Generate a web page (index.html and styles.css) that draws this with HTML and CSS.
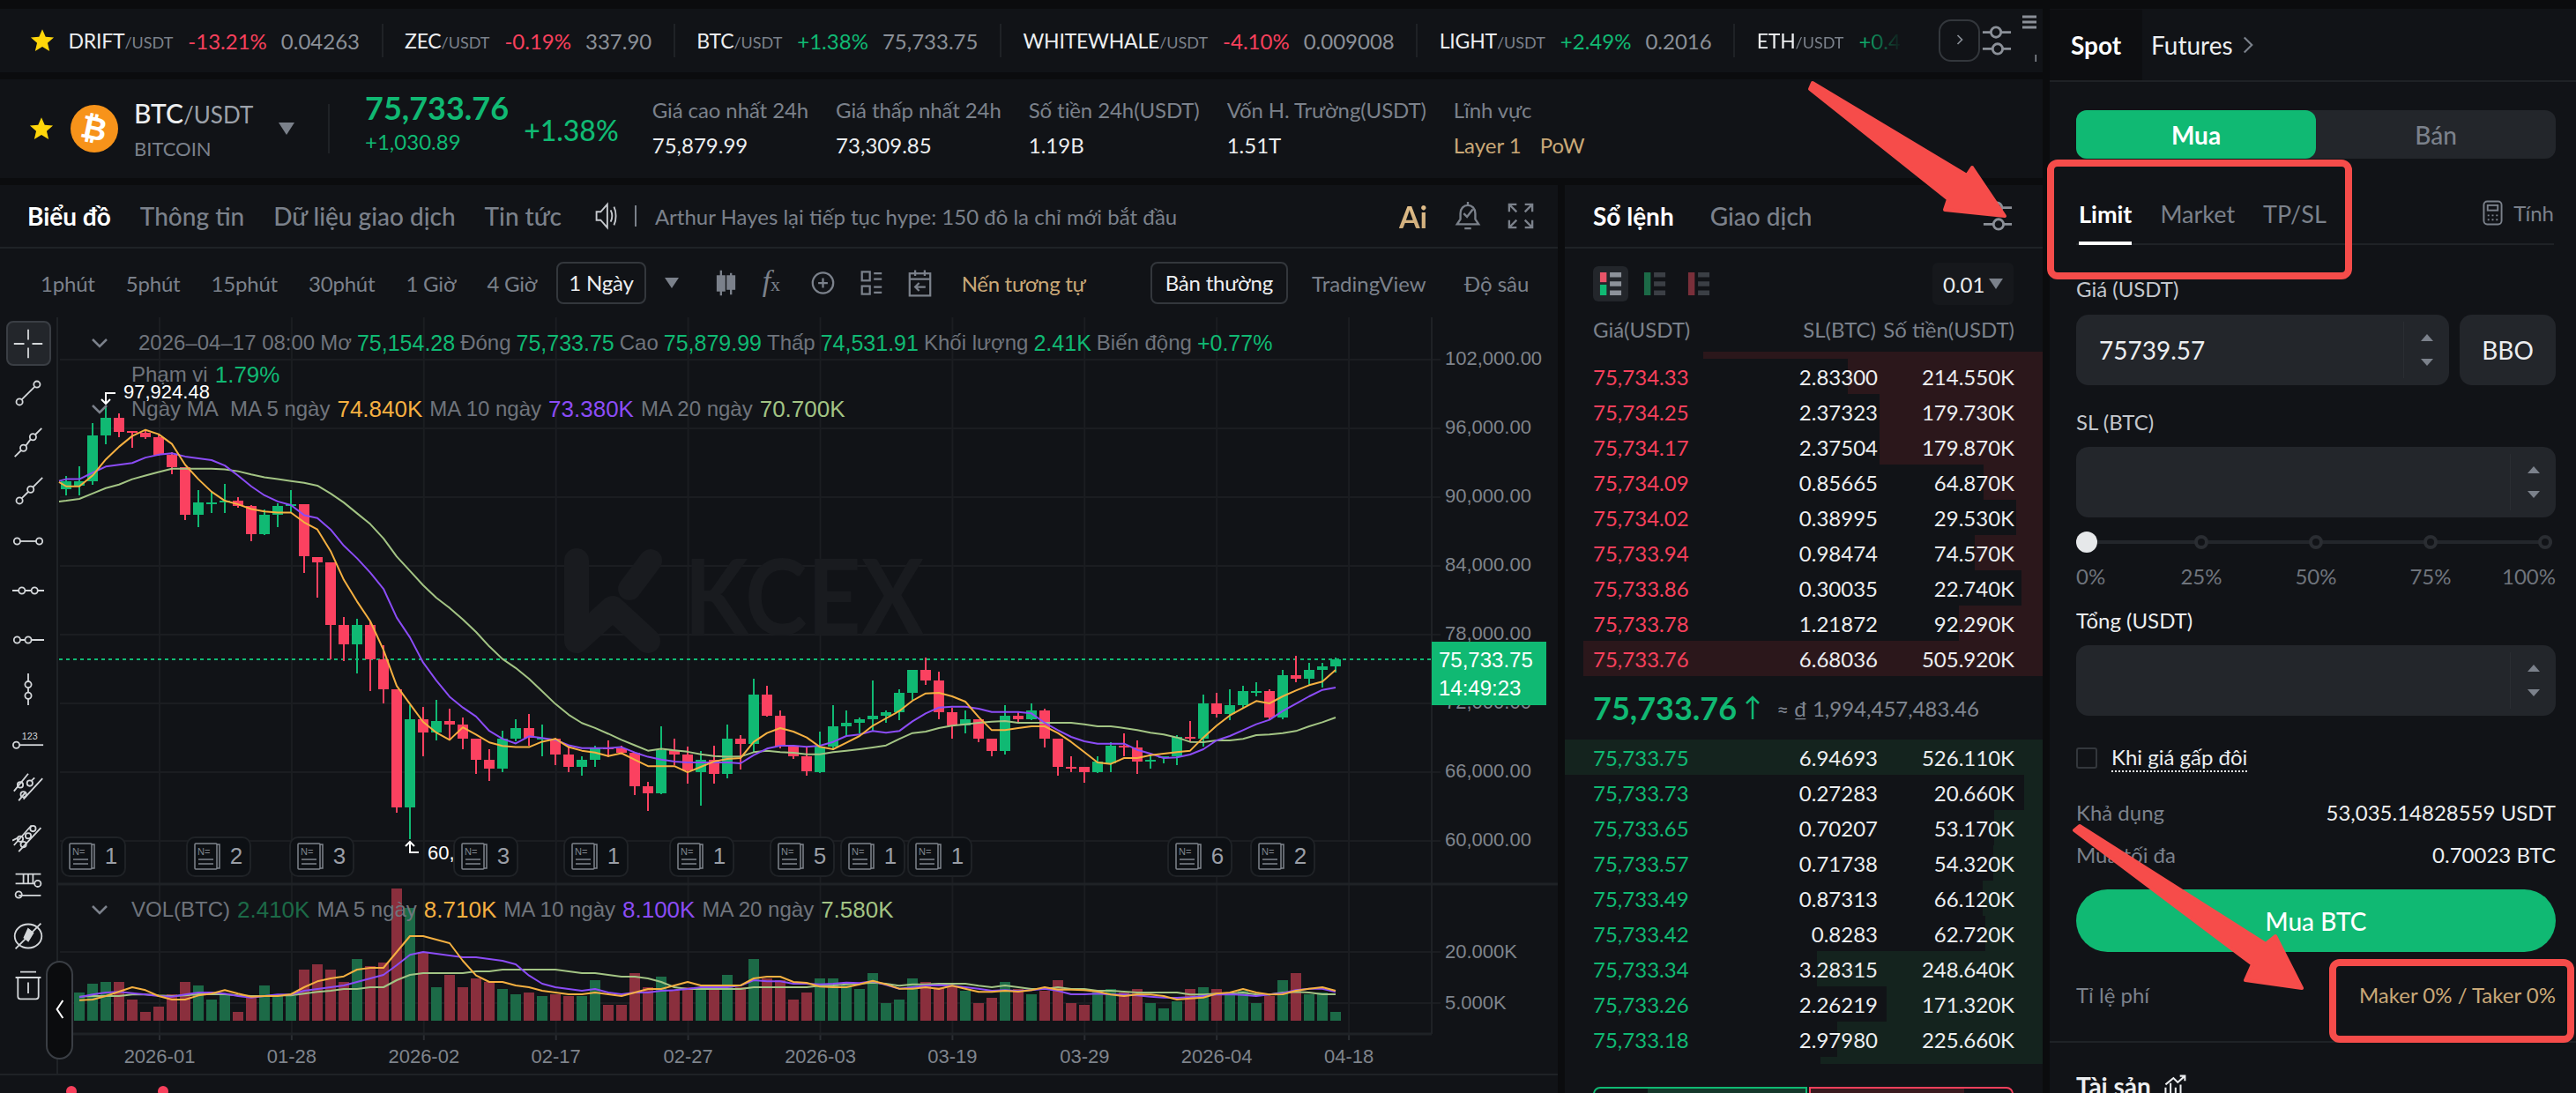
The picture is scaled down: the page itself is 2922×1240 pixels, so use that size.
FILE: index.html
```html
<!DOCTYPE html>
<html lang="vi">
<head>
  <meta charset="UTF-8" />
  <title>BTC/USDT Spot</title>
  <link rel="stylesheet" href="styles.css">
</head>
<body>
  <div class="page">
    <main class="market">
      <div class="ticker">
        <div class="tick">
          <svg class="star" viewBox="0 0 24 24"><path d="M12 1l3.2 7.4 8 .7-6.1 5.3 1.9 7.9L12 18.1 5 22.300l1.900-7.900L.8 9.100l8-.7z"/></svg>
          <span class="tick-name">DRIFT<small>/USDT</small></span><span class="down">-13.21%</span><span class="tick-price">0.04263</span>
        </div>
        <div class="tick"><span class="tick-name">ZEC<small>/USDT</small></span><span class="down">-0.19%</span><span class="tick-price">337.90</span></div>
        <div class="tick"><span class="tick-name">BTC<small>/USDT</small></span><span class="up">+1.38%</span><span class="tick-price">75,733.75</span></div>
        <div class="tick"><span class="tick-name">WHITEWHALE<small>/USDT</small></span><span class="down">-4.10%</span><span class="tick-price">0.009008</span></div>
        <div class="tick"><span class="tick-name">LIGHT<small>/USDT</small></span><span class="up">+2.49%</span><span class="tick-price">0.2016</span></div>
        <div class="tick tick-last"><span class="tick-name">ETH<small>/USDT</small></span><span class="up">+0.4</span></div>
        <button class="tick-next"><svg viewBox="0 0 12 20"><path d="M3 4l6 6-6 6"/></svg></button>
        <svg class="sliders" viewBox="0 0 36 36"><path d="M1 8h10M23 8h12M1 28h12M25 28h10"/><circle cx="17" cy="8" r="6"/><circle cx="19" cy="28" r="6"/></svg>
        <svg class="tick-menu" viewBox="0 0 16 60"><path d="M0 9h16M0 15h16M0 21h16M16 52v11H4"/></svg>
      </div>

      <header class="pair">
        <svg class="star" viewBox="0 0 24 24"><path d="M12 1l3.2 7.4 8 .7-6.1 5.3 1.9 7.9L12 18.1 5 22.300l1.900-7.900L.8 9.100l8-.7z"/></svg>
        <div class="coin"><span>₿</span></div>
        <div class="pair-name">
          <div class="pair-symbol">BTC<small>/USDT</small></div>
          <div class="pair-full">BITCOIN</div>
        </div>
        <i class="tri pair-tri"></i>
        <div class="pair-quote">
          <div class="quote-main">
            <div class="quote-price">75,733.76</div>
            <div class="quote-diff">+1,030.89</div>
          </div>
          <div class="quote-pct">+1.38%</div>
        </div>
        <div class="stats">
          <div class="stat"><span>Giá cao nhất 24h</span><b>75,879.99</b></div>
          <div class="stat"><span>Giá thấp nhất 24h</span><b>73,309.85</b></div>
          <div class="stat"><span>Số tiền 24h(USDT)</span><b>1.19B</b></div>
          <div class="stat"><span>Vốn H. Trường(USDT)</span><b>1.51T</b></div>
          <div class="stat"><span>Lĩnh vực</span><b class="sector"><em>Layer 1</em><em>PoW</em></b></div>
        </div>
      </header>

      <div class="board">
        <section class="chart-panel">
          <nav class="panel-tabs">
            <a class="tab active">Biểu đồ</a>
            <a class="tab">Thông tin</a>
            <a class="tab">Dữ liệu giao dịch</a>
            <a class="tab">Tin tức</a>
            <svg class="speaker" viewBox="0 0 26 36"><path d="M2 13h5l8-9v28l-8-9H2zM19 11c2 4 2 10 0 14M23 7c3 6 3 16 0 22"/></svg>
            <span class="news-bar"></span>
            <span class="news">Arthur Hayes lại tiếp tục hype: 150 đô la chỉ mới bắt đầu</span>
            <span class="ai">Ai</span>
            <svg class="tab-ic" viewBox="0 0 32 36"><path d="M3 28h26l-4-6V15c0-6-4-10-9-10s-9 4-9 10v7zM16 1v4M12 33h8M11 15l4 4 7-9"/></svg>
            <svg class="tab-ic" viewBox="0 0 32 32"><path d="M2 11V2h9M2 2l9 9M21 2h9v9M30 2l-9 9M2 21v9h9M2 30l9-9M30 21v9h-9M30 30l-9-9"/></svg>
          </nav>
          <div class="chart-tools">
            <span class="period">1phút</span>
            <span class="period">5phút</span>
            <span class="period">15phút</span>
            <span class="period">30phút</span>
            <span class="period">1 Giờ</span>
            <span class="period">4 Giờ</span>
            <span class="period boxed">1 Ngày</span>
            <i class="tri tools-tri"></i>
            <svg class="tool-ic" viewBox="0 0 26 36"><path d="M7 3v30M19 6v26"/><rect x="3" y="10" width="8" height="17" fill="currentColor"/><rect x="15" y="10" width="8" height="15" fill="currentColor"/></svg>
            <span class="tool-fx"><i>f</i><small>x</small></span>
            <svg class="tool-ic" viewBox="0 0 30 36"><circle cx="15" cy="18" r="13"/><path d="M15 12v12M9 18h12"/></svg>
            <svg class="tool-ic" viewBox="0 0 30 36"><rect x="3" y="4" width="10" height="11"/><rect x="3" y="22" width="10" height="10"/><path d="M18 6h10M18 13h10M18 23h10M18 30h10"/></svg>
            <svg class="tool-ic" viewBox="0 0 30 36"><rect x="2" y="6" width="26" height="28"/><path d="M2 13h26M9 2v7M21 2v7M22 23H9M14 18l-5 5 5 5"/></svg>
            <span class="similar">Nến tương tự</span>
            <span class="period boxed view">Bản thường</span>
            <span class="period chart-kind">TradingView</span>
            <span class="period chart-kind">Độ sâu</span>
          </div>
          <div class="chart-body">
            <div class="draw-tools">
              <div class="draw-ic selected"><svg viewBox="0 0 40 40"><path d="M20 2v13M20 25v13M2 20h13M25 20h13"/></svg></div>
              <div class="draw-ic"><svg viewBox="0 0 40 40"><circle cx="9" cy="31" r="4"/><circle cx="31" cy="9" r="4"/><path d="M12 28L28 12"/></svg></div>
              <div class="draw-ic"><svg viewBox="0 0 40 40"><circle cx="14" cy="27" r="4"/><circle cx="26" cy="13" r="4"/><path d="M3 38l8-8M17 24l6-8M29 10l8-8"/></svg></div>
              <div class="draw-ic"><svg viewBox="0 0 40 40"><circle cx="9" cy="31" r="4"/><circle cx="23" cy="17" r="4"/><path d="M12 28l8-8M26 14L38 2"/></svg></div>
              <div class="draw-ic"><svg viewBox="0 0 40 40"><circle cx="6" cy="20" r="4"/><circle cx="34" cy="20" r="4"/><path d="M10 20h20"/></svg></div>
              <div class="draw-ic"><svg viewBox="0 0 40 40"><circle cx="12" cy="20" r="4"/><circle cx="28" cy="20" r="4"/><path d="M0 20h8M16 20h8M32 20h8"/></svg></div>
              <div class="draw-ic"><svg viewBox="0 0 40 40"><circle cx="6" cy="20" r="4"/><circle cx="20" cy="20" r="4"/><path d="M10 20h6M24 20h16"/></svg></div>
              <div class="draw-ic"><svg viewBox="0 0 40 40"><circle cx="20" cy="14" r="4"/><circle cx="20" cy="28" r="4"/><path d="M20 0v10M20 18v6M20 32v8"/></svg></div>
              <div class="draw-ic"><svg viewBox="0 0 40 40"><circle cx="5" cy="28" r="4"/><path d="M9 28h30"/><text x="12" y="21">123</text></svg></div>
              <div class="draw-ic"><svg viewBox="0 0 40 40"><circle cx="10" cy="16" r="3.500"/><circle cx="22" cy="14" r="3.500"/><circle cx="14" cy="28" r="3.500"/><path d="M2 24L20 2M8 36l8-10M24 11l4-4M14 34L38 8"/></svg></div>
              <div class="draw-ic"><svg viewBox="0 0 40 40"><circle cx="10" cy="22" r="3.500"/><circle cx="20" cy="18" r="3.500"/><circle cx="14" cy="29" r="3.500"/><circle cx="26" cy="9" r="3.500"/><path d="M2 30L24 5M8 38l28-30M0 24l8-4"/></svg></div>
              <div class="draw-ic"><svg viewBox="0 0 40 40"><path d="M4 4h32M4 16h24M8 31h28"/><circle cx="32" cy="16" r="4"/><circle cx="8" cy="30" r="4"/><path d="M20 4v12M26 16V4M14 4v12"/></svg></div>
              <div class="draw-ic"><svg viewBox="0 0 40 40"><ellipse cx="20" cy="20" rx="17" ry="15"/><path d="M4 36L36 4"/><path d="M20 11l-5 11 5 4 6-10z" fill="currentColor"/></svg></div>
              <div class="draw-ic"><svg viewBox="0 0 40 40"><path d="M10 3h20M4 10h32M7 10v24a3 3 0 0 0 3 3h20a3 3 0 0 0 3-3V10M20 16v14"/></svg></div>
            </div>
            <svg id="chart" class="chart" viewBox="66 360 1701 858"></svg>
            <div class="legend legend-candle">
              <svg class="fold" viewBox="0 0 20 12"><path d="M2 2l8 8 8-8"/></svg>
              <span>2026–04–17 08:00</span><span>Mơ</span><b>75,154.28</b><span>Đóng</span><b>75,733.75</b><span>Cao</span><b>75,879.99</b><span>Thấp</span><b>74,531.91</b><span>Khối lượng</span><b>2.41K</b><span>Biến động</span><b>+0.77%</b>
            </div>
            <div class="legend legend-range"><span>Phạm vi</span><b>1.79%</b></div>
            <div class="legend legend-ma">
              <svg class="fold" viewBox="0 0 20 12"><path d="M2 2l8 8 8-8"/></svg>
              <span>Ngày MA&nbsp;&nbsp;MA 5 ngày</span><b class="ma5">74.840K</b><span>MA 10 ngày</span><b class="ma10">73.380K</b><span>MA 20 ngày</span><b class="ma20">70.700K</b>
            </div>
            <div class="legend legend-vol">
              <svg class="fold" viewBox="0 0 20 12"><path d="M2 2l8 8 8-8"/></svg>
              <span>VOL(BTC)</span><b class="vol">2.410K</b><span>MA 5 ngày</span><b class="ma5">8.710K</b><span>MA 10 ngày</span><b class="ma10">8.100K</b><span>MA 20 ngày</span><b class="ma20">7.580K</b>
            </div>
            <button class="collapse"><svg viewBox="0 0 12 28"><path d="M10 2L2 14l8 12"/></svg></button>
          </div>
          <div class="chart-foot"><i class="foot-dot"></i><i class="foot-dot"></i></div>
        </section>

        <section class="book">
          <nav class="panel-tabs book-tabs">
            <a class="tab active">Sổ lệnh</a>
            <a class="tab">Giao dịch</a>
            <svg class="sliders" viewBox="0 0 36 36"><path d="M1 8h10M23 8h12M1 28h12M25 28h10"/><circle cx="17" cy="8" r="6"/><circle cx="19" cy="28" r="6"/></svg>
          </nav>
          <div class="book-controls">
            <div class="mode selected">
              <svg viewBox="0 0 26 28"><rect x="0" y="0" width="8" height="12" fill="#e95468"/><rect x="0" y="15" width="8" height="13" fill="#10b973"/><path d="M12 0h14v6H12zM12 11h14v6H12zM12 22h14v6H12z" fill="#8d929a"/></svg>
            </div>
            <div class="mode">
              <svg viewBox="0 0 26 28"><rect x="0" y="0" width="8" height="28" fill="#1c6a47"/><path d="M12 0h14v6H12zM12 11h14v6H12zM12 22h14v6H12z" fill="#3b3f45"/></svg>
            </div>
            <div class="mode">
              <svg viewBox="0 0 26 28"><rect x="0" y="0" width="8" height="28" fill="#7a2f3a"/><path d="M12 0h14v6H12zM12 11h14v6H12zM12 22h14v6H12z" fill="#3b3f45"/></svg>
            </div>
            <div class="precision">0.01<i class="tri"></i></div>
          </div>
          <div class="book-head"><span>Giá(USDT)</span><span>SL(BTC)</span><span>Số tiền(USDT)</span></div>

          <div class="book-strip"><i class="depth ask" style="width:385px"></i></div>
          <div class="row"><i class="depth ask" style="width:221px"></i><span class="down">75,734.33</span><span>2.83300</span><span>214.550K</span></div>
          <div class="row"><i class="depth ask" style="width:185px"></i><span class="down">75,734.25</span><span>2.37323</span><span>179.730K</span></div>
          <div class="row"><i class="depth ask" style="width:185px"></i><span class="down">75,734.17</span><span>2.37504</span><span>179.870K</span></div>
          <div class="row"><i class="depth ask" style="width:67px"></i><span class="down">75,734.09</span><span>0.85665</span><span>64.870K</span></div>
          <div class="row"><i class="depth ask" style="width:30px"></i><span class="down">75,734.02</span><span>0.38995</span><span>29.530K</span></div>
          <div class="row"><i class="depth ask" style="width:77px"></i><span class="down">75,733.94</span><span>0.98474</span><span>74.570K</span></div>
          <div class="row"><i class="depth ask" style="width:24px"></i><span class="down">75,733.86</span><span>0.30035</span><span>22.740K</span></div>
          <div class="row"><i class="depth ask" style="width:95px"></i><span class="down">75,733.78</span><span>1.21872</span><span>92.290K</span></div>
          <div class="row"><i class="depth ask" style="width:521px"></i><span class="down">75,733.76</span><span>6.68036</span><span>505.920K</span></div>

          <div class="mid">
            <span class="mid-price">75,733.76</span>
            <svg class="mid-arrow" viewBox="0 0 18 30"><path d="M9 28V3M2 10l7-7 7 7"/></svg>
            <span class="mid-fiat">≈ ₫ 1,994,457,483.46</span>
          </div>

          <div class="row"><i class="depth bid" style="width:542px"></i><span class="up">75,733.75</span><span>6.94693</span><span>526.110K</span></div>
          <div class="row"><i class="depth bid" style="width:21px"></i><span class="up">75,733.73</span><span>0.27283</span><span>20.660K</span></div>
          <div class="row"><i class="depth bid" style="width:55px"></i><span class="up">75,733.65</span><span>0.70207</span><span>53.170K</span></div>
          <div class="row"><i class="depth bid" style="width:56px"></i><span class="up">75,733.57</span><span>0.71738</span><span>54.320K</span></div>
          <div class="row"><i class="depth bid" style="width:68px"></i><span class="up">75,733.49</span><span>0.87313</span><span>66.120K</span></div>
          <div class="row"><i class="depth bid" style="width:65px"></i><span class="up">75,733.42</span><span>0.8283</span><span>62.720K</span></div>
          <div class="row"><i class="depth bid" style="width:256px"></i><span class="up">75,733.34</span><span>3.28315</span><span>248.640K</span></div>
          <div class="row"><i class="depth bid" style="width:177px"></i><span class="up">75,733.26</span><span>2.26219</span><span>171.320K</span></div>
          <div class="row"><i class="depth bid" style="width:233px"></i><span class="up">75,733.18</span><span>2.97980</span><span>225.660K</span></div>
          <div class="book-strip"><i class="depth bid" style="width:252px"></i></div>

          <div class="ratio"><i class="ratio-buy"></i><i class="ratio-sell"></i></div>
        </section>
      </div>
    </main>

    <aside class="trade">
      <div class="trade-tabs">
        <a class="spot">Spot</a>
        <a class="futures">Futures<svg viewBox="0 0 14 24"><path d="M2 2l10 10L2 22"/></svg></a>
      </div>
      <div class="trade-form">
        <div class="side">
          <button class="side-btn buy">Mua</button>
          <button class="side-btn">Bán</button>
        </div>
        <div class="order-types">
          <a class="otype active">Limit</a>
          <a class="otype">Market</a>
          <a class="otype">TP/SL</a>
          <span class="calc">
            <svg viewBox="0 0 24 30"><rect x="1.500" y="1.500" width="21" height="27" rx="4"/><rect x="6" y="6" width="12" height="6"/><path d="M6 18h2M11 18h2M16 18h2M6 23h2M11 23h2M16 23h2"/></svg>
            Tính
          </span>
        </div>

        <label class="flabel first">Giá (USDT)</label>
        <div class="input-row">
          <div class="input">
            <span class="input-val">75739.57</span>
            <div class="stepper"><i class="tri tri-up"></i><i class="tri"></i></div>
          </div>
          <button class="bbo">BBO</button>
        </div>

        <label class="flabel">SL (BTC)</label>
        <div class="input">
          <span class="input-val"></span>
          <div class="stepper"><i class="tri tri-up"></i><i class="tri"></i></div>
        </div>

        <div class="slider"><i class="knob"></i><i class="stop"></i><i class="stop"></i><i class="stop"></i><i class="stop"></i></div>
        <div class="slider-marks"><span>0%</span><span>25%</span><span>50%</span><span>75%</span><span>100%</span></div>

        <label class="flabel total">Tổng (USDT)</label>
        <div class="input">
          <span class="input-val"></span>
          <div class="stepper"><i class="tri tri-up"></i><i class="tri"></i></div>
        </div>

        <div class="check"><i class="box"></i><span>Khi giá gấp đôi</span></div>

        <div class="info first"><span>Khả dụng</span><b>53,035.14828559 USDT</b></div>
        <div class="info"><span>Mua tối đa</span><b>0.70023 BTC</b></div>

        <button class="submit">Mua BTC</button>

        <div class="info fee"><span>Tỉ lệ phí</span><b>Maker 0% / Taker 0%</b></div>
      </div>
      <div class="assets">
        <h3>Tài sản</h3>
        <svg viewBox="0 0 32 32"><path d="M3 30V18M10 30V12M17 30V18M24 30V14M3 14L14 5l6 6L30 2M23 2h7v7"/></svg>
      </div>
    </aside>
  </div>

  <svg class="marks" viewBox="0 0 2922 1240">
    <path class="arrow" d="M2056 94L2231 199 2237 190 2274 245 2206 238 2210 226 2053 101z"/>
    <path class="arrow" d="M2359 937L2570 1071 2581 1062 2611 1121 2547 1112 2555 1094 2353 942z"/>
    <rect class="callout" x="2326" y="185" width="338" height="128" rx="8"/>
    <rect class="callout" x="2646" y="1092" width="270" height="87" rx="8"/>
  </svg>

  <script src="chart.js"></script>
</body>
</html>
```

FILE: styles.css
```css
* {
  box-sizing: border-box;
}

body {
  margin: 0;
  width: 2922px;
  height: 1240px;
  overflow: hidden;
  background: #0b0c0e;
  color: #eceef0;
  font-family: "Lato", "Noto Sans", sans-serif;
  font-size: 24px;
}

small {
  font-size: 20px;
  color: #7b818b;
  font-weight: 400;
}

.up { color: #10b973; }
.down { color: #f7405c; }

.page {
  display: flex;
  gap: 8px;
  padding-top: 10px;
}

.market {
  width: 2317px;
  display: flex;
  flex-direction: column;
  gap: 8px;
}

/* ticker */
.ticker {
  position: relative;
  height: 72px;
  display: flex;
  align-items: center;
  padding-left: 9px;
  background: #111317;
}

.tick {
  display: flex;
  align-items: center;
  gap: 16px;
  height: 38px;
  padding: 0 24.5px;
  border-right: 2px solid #1f2226;
  white-space: nowrap;
}

.tick .star { margin-right: 0; }

.tick-name {
  margin-right: 1px;
  font-size: 23px;
  letter-spacing: -0.2px;
}

.tick-name small { font-size: 18px; letter-spacing: 0; }

.tick-price { color: #8b9098; }

.tick-last {
  width: 190px;
  border: 0;
  overflow: hidden;
  -webkit-mask-image: linear-gradient(90deg, #000 75%, transparent 100%);
}

.star {
  width: 28px;
  height: 28px;
  margin-right: -2px;
  flex: none;
  fill: #ffd60a;
}

.tick-next {
  width: 47px;
  height: 48px;
  margin-left: auto;
  padding: 0;
  background: none;
  border: 2px solid #33373c;
  border-radius: 14px;
}

.tick-next svg {
  width: 10px;
  height: 18px;
  fill: none;
  stroke: #8b9098;
  stroke-width: 2;
}

.sliders {
  width: 34px;
  height: 34px;
  margin-left: 2px;
  fill: none;
  stroke: #8b9098;
  stroke-width: 3;
}

.ticker > .sliders { margin-right: 35px; }

.tick-menu {
  position: absolute;
  right: 7px;
  top: 0;
  width: 16px;
  height: 60px;
  fill: none;
  stroke: #8b9098;
  stroke-width: 3;
}

/* pair header */
.pair {
  height: 112px;
  display: flex;
  align-items: center;
  padding-left: 33px;
  background: #111317;
}

.coin {
  width: 54px;
  height: 54px;
  margin-left: 21px;
  display: flex;
  align-items: center;
  justify-content: center;
  border-radius: 50%;
  background: #f7931a;
  color: #fff;
  font-family: "DejaVu Sans", sans-serif;
  font-size: 36px;
  font-weight: 700;
}

.coin span { transform: rotate(12deg); }

.pair-name { margin-left: 18px; width: 146px; }

.pair-symbol {
  font-size: 30px;
  font-weight: 500;
  line-height: 36px;
}

.pair-symbol small { font-size: 26px; color: #9ca1a9; }

.pair-full {
  margin-top: 8px;
  color: #7b818b;
  font-size: 22px;
  line-height: 26px;
}

.tri {
  display: block;
  width: 0;
  height: 0;
  border-left: 9px solid transparent;
  border-right: 9px solid transparent;
  border-top: 14px solid #7b818b;
}

.tri-up { transform: rotate(180deg); }

.pair-tri { margin-left: 18px; }

.pair-quote {
  display: flex;
  align-items: flex-end;
  gap: 17px;
  height: 56px;
  margin-left: 38px;
  padding-left: 40px;
  border-left: 2px solid #1f2226;
}

.quote-main { margin-top: -6px; }

.quote-price {
  color: #10b973;
  font-size: 36px;
  font-weight: 700;
  line-height: 40px;
}

.quote-diff {
  margin-top: 6px;
  color: #10b973;
  line-height: 26px;
}

.quote-pct {
  color: #10b973;
  font-size: 32px;
  font-weight: 500;
  line-height: 40px;
  margin-bottom: 6px;
}

.stats {
  display: flex;
  gap: 31px;
  margin-left: 38px;
  margin-top: -2px;
}

.stat {
  display: flex;
  flex-direction: column;
  gap: 14px;
  white-space: nowrap;
}

.stat span { color: #7b818b; line-height: 26px; letter-spacing: -0.1px; }
.stat b { font-weight: 400; line-height: 26px; }

.sector { display: flex; gap: 21px; color: #c9a877; }
.sector em { font-style: normal; }

/* board */
.board {
  display: flex;
  gap: 8px;
  height: 1030px;
}

.chart-panel {
  width: 1767px;
  background: #111317;
}

.panel-tabs {
  height: 72px;
  display: flex;
  align-items: center;
  padding-left: 31px;
  border-bottom: 2px solid #1f2226;
  white-space: nowrap;
}

.tab {
  margin-right: 33px;
  color: #7b818b;
  font-size: 28px;
  font-weight: 500;
}

.tab.active { color: #fff; font-weight: 700; }

.speaker {
  width: 26px;
  height: 34px;
  margin-left: 4px;
  flex: none;
  fill: none;
  stroke: #c6c9ce;
  stroke-width: 2;
}

.news-bar {
  width: 2px;
  height: 24px;
  margin: 0 21px 0 20px;
  flex: none;
  background: #7b818b;
}

.news {
  width: 844px;
  flex: none;
  color: #7b818b;
}

.ai {
  width: 63px;
  flex: none;
  background: linear-gradient(180deg, #e8c48f, #c9a877);
  -webkit-background-clip: text;
  background-clip: text;
  color: transparent;
  font-size: 34px;
  font-weight: 700;
}

.tab-ic {
  width: 30px;
  height: 34px;
  margin-right: 30px;
  flex: none;
  fill: none;
  stroke: #7b818b;
  stroke-width: 2.500;
}

.chart-tools {
  height: 78px;
  display: flex;
  align-items: center;
  padding-left: 46px;
  color: #7b818b;
  font-size: 24px;
  white-space: nowrap;
}

.period { margin-right: 35px; letter-spacing: -0.2px; }

.boxed {
  margin: 0 0 0 -13px;
  padding: 9px 12px;
  color: #eceef0;
  border: 2px solid #33373c;
  border-radius: 8px;
  line-height: 26px;
}

.tools-tri {
  margin: 0 40px 0 21px;
  border-left-width: 8px;
  border-right-width: 8px;
  border-top-width: 12px;
}

.tool-ic {
  width: 27px;
  height: 34px;
  margin-right: 28px;
  flex: none;
  fill: none;
  stroke: #7b818b;
  stroke-width: 2.500;
}

.tool-fx {
  width: 27px;
  margin-right: 28px;
  font-family: "Liberation Serif", serif;
  font-size: 34px;
  line-height: 34px;
}

.tool-fx small { font-size: 22px; }

.similar {
  width: 214px;
  flex: none;
  margin-left: 6px;
  color: #c9a877;
  letter-spacing: -0.3px;
}

.view { margin: 0 27px 0 0; padding: 9px 15px; flex: none; }

.chart-kind { margin-right: 43px; letter-spacing: 0; }
.chart-kind:last-child { margin-right: 0; }

.chart-body {
  position: relative;
  height: 858px;
  display: flex;
}

.draw-tools {
  width: 66px;
  padding-top: 4px;
  display: flex;
  flex-direction: column;
  align-items: center;
  gap: 5px;
  border-right: 2px solid #1f2226;
  background: #111317;
}

.draw-ic {
  width: 51px;
  height: 51px;
  display: flex;
  align-items: center;
  justify-content: center;
  color: #d4d7da;
}

.draw-ic.selected {
  background: #23262b;
  border: 2px solid #3a3e44;
  border-radius: 8px;
}

.draw-ic svg {
  width: 36px;
  height: 36px;
  fill: none;
  stroke: currentColor;
  stroke-width: 2;
}

.draw-ic text {
  fill: currentColor;
  stroke: none;
  font-family: "Liberation Sans", sans-serif;
  font-size: 12px;
}

.chart {
  width: 1701px;
  height: 858px;
}

.chart text { font-family: "Liberation Sans", sans-serif; }

/* overlays on the chart */
.legend {
  position: absolute;
  left: 149px;
  display: flex;
  align-items: center;
  gap: 8px;
  color: #6f747c;
  font-family: "Liberation Sans", sans-serif;
  font-size: 24px;
  line-height: 28px;
  white-space: nowrap;
}

.legend b { font-weight: 400; font-size: 26px; color: #10b973; }
.legend .ma5 { color: #f5b041; }
.legend .ma10 { color: #8b4cf6; }
.legend .ma20 { color: #a3c484; }
.legend .vol { color: #1c6a47; }

.fold {
  position: absolute;
  left: -46px;
  width: 20px;
  height: 12px;
  fill: none;
  stroke: #7b818b;
  stroke-width: 2.500;
}

.legend-candle { top: 15px; left: 157px; gap: 6px; }
.legend-candle b { font-size: 25px; }
.legend-candle .fold { left: -54px; }
.legend-range { top: 51px; }
.legend-ma { top: 90px; }
.legend-vol { top: 658px; }

.collapse {
  position: absolute;
  left: 52px;
  top: 730px;
  width: 31px;
  height: 112px;
  padding: 0;
  background: #0b0c0e;
  border: 2px solid #3a3e44;
  border-radius: 16px;
}

.collapse svg {
  width: 10px;
  height: 24px;
  fill: none;
  stroke: #fff;
  stroke-width: 2.500;
}

.chart-foot {
  height: 22px;
  padding-left: 75px;
  border-top: 2px solid #1f2226;
  overflow: hidden;
  display: flex;
  gap: 92px;
}

.foot-dot {
  width: 12px;
  height: 12px;
  margin-top: 12px;
  border-radius: 50%;
  background: #f7405c;
}

/* order book */
.book {
  position: relative;
  width: 542px;
  background: #111317;
  overflow: hidden;
}

.book-tabs { padding-left: 32px; }
.book-tabs .tab { margin-right: 41px; }
.book-tabs .sliders { margin-left: 153px; }

.book-controls {
  height: 72px;
  display: flex;
  align-items: center;
  padding: 8px 33px 0 32px;
}

.mode {
  width: 40px;
  height: 40px;
  margin-right: 10px;
  display: flex;
  align-items: center;
  justify-content: center;
  border-radius: 6px;
}

.mode.selected { background: #23262b; }

.mode svg { width: 26px; height: 26px; }

.precision {
  width: 92px;
  height: 48px;
  margin-left: auto;
  display: flex;
  align-items: center;
  gap: 5px;
  padding-left: 12px;
  background: #16181c;
  border-radius: 6px;
}

.precision .tri {
  border-left-width: 8px;
  border-right-width: 8px;
  border-top-width: 12px;
}

.book-head {
  height: 45px;
  display: grid;
  grid-template-columns: 1fr 160px 155px;
  align-items: center;
  padding: 0 32px 6px;
  color: #7b818b;
}

.book-head span:nth-child(2) { text-align: right; padding-right: 2px; }
.book-head span:last-child { text-align: right; white-space: nowrap; }

.book-strip {
  position: relative;
  height: 8px;
}

.row {
  position: relative;
  height: 40px;
  display: grid;
  grid-template-columns: 1fr 160px 155px;
  align-items: center;
  padding: 0 32px;
}

.row span { position: relative; }
.row span:nth-of-type(n+2) { text-align: right; }

.depth {
  position: absolute;
  top: 0;
  right: 0;
  bottom: 0;
}

.depth.ask { background: #2b171b; }
.depth.bid { background: #14231e; }

.mid {
  height: 72px;
  display: flex;
  align-items: center;
  padding-left: 32px;
}

.mid-price {
  color: #10b973;
  font-size: 36px;
  font-weight: 700;
}

.mid-arrow {
  width: 18px;
  height: 30px;
  margin: 0 0 0 9px;
  fill: none;
  stroke: #10b973;
  stroke-width: 2.500;
}

.mid-fiat {
  margin-left: 18px;
  color: #7f8590;
}

.ratio {
  display: flex;
  gap: 2px;
  height: 30px;
  margin: 26px 33px 0 32px;
}

.ratio-buy {
  width: 243px;
  background: #14382a;
  border-left: 62px solid #111317;
  outline: 2px solid #10b973;
  outline-offset: -2px;
  border-radius: 8px 0 0 0;
}

.ratio-sell {
  flex: 1;
  background: #3a1a1f;
  border-right: 56px solid #111317;
  outline: 2px solid #f7405c;
  outline-offset: -2px;
  border-radius: 0 8px 0 0;
}

/* trade form */
.trade {
  width: 597px;
  height: 1230px;
  background: #111317;
  overflow: hidden;
}

.trade-tabs {
  height: 83px;
  display: flex;
  align-items: center;
  border-bottom: 2px solid #1f2226;
  font-size: 28px;
}

.spot {
  width: 105px;
  height: 80px;
  padding-left: 24px;
  line-height: 80px;
  background: #0d0e11;
  color: #fff;
  font-weight: 700;
}

.futures {
  display: flex;
  align-items: center;
  gap: 11px;
  margin-left: 10px;
}

.futures svg {
  width: 12px;
  height: 22px;
  fill: none;
  stroke: #7b818b;
  stroke-width: 2.500;
}

.trade-form { padding: 32px 23px 0 30px; border-bottom: 2px solid #1f2226; height: 1090px; }

.side {
  display: flex;
  height: 55px;
  background: #23262b;
  border-radius: 12px;
}

.side-btn {
  flex: 1;
  border: 0;
  background: none;
  border-radius: 12px;
  color: #7b818b;
  font: 500 28px "Lato", sans-serif;
}

.side-btn.buy { background: #10b973; color: #fff; font-weight: 700; }

.order-types {
  height: 98px;
  display: flex;
  align-items: flex-end;
  gap: 32px;
  margin-right: 2px;
  border-bottom: 2px solid #1f2226;
}

.otype {
  position: relative;
  height: 50px;
  margin-left: 3px;
  margin-right: -3px;
  color: #7b818b;
  font-size: 27px;
}

.otype.active { color: #fff; font-weight: 700; }

.otype.active::after {
  content: "";
  position: absolute;
  left: 0;
  right: 0;
  bottom: -2px;
  height: 4px;
  background: #fff;
}

.calc {
  margin-left: auto;
  height: 53px;
  display: flex;
  align-items: center;
  align-self: flex-end;
  padding-bottom: 16px;
  gap: 12px;
  color: #7b818b;
}

.calc svg {
  width: 23px;
  height: 29px;
  fill: none;
  stroke: #7b818b;
  stroke-width: 2;
}

.flabel {
  display: block;
  height: 30px;
  margin-top: 27px;
  margin-bottom: 13px;
  color: #c4c7cc;
  line-height: 30px;
}

.flabel.first { margin-top: 35px; margin-bottom: 14px; }
.flabel.total { margin-top: 20px; color: #eceef0; }

.input-row { display: flex; gap: 12px; }

.input {
  flex: 1;
  height: 80px;
  display: flex;
  align-items: center;
  padding-left: 26px;
  background: #23262b;
  border-radius: 14px;
}

.input-val { flex: 1; font-size: 28px; }

.stepper {
  width: 52px;
  height: 64px;
  display: flex;
  flex-direction: column;
  align-items: center;
  justify-content: space-around;
  padding: 4px 0;
  border-left: 1px solid #2b2e33;
}

.stepper .tri {
  border-left-width: 7px;
  border-right-width: 7px;
  border-top-width: 8px;
}

.bbo {
  width: 109px;
  height: 80px;
  border: 0;
  background: #23262b;
  border-radius: 14px;
  color: #eceef0;
  font: 28px "Lato", sans-serif;
}

.slider {
  position: relative;
  height: 24px;
  margin-top: 16px;
  display: flex;
  align-items: center;
  gap: 114px;
}

.slider::before {
  content: "";
  position: absolute;
  left: 0;
  right: 4px;
  top: 10px;
  height: 4px;
  background: #23262b;
}

.knob {
  position: relative;
  width: 24px;
  height: 24px;
  margin-right: -4px;
  border-radius: 50%;
  background: #e6e8ea;
}

.stop {
  position: relative;
  width: 16px;
  height: 16px;
  border: 4px solid #2a2d32;
  border-radius: 50%;
  background: #111317;
}

.slider-marks {
  display: grid;
  grid-template-columns: 77px 130px 130px 130px 77px;
  margin-top: 12px;
  color: #6f747c;
  line-height: 30px;
  text-align: center;
}

.slider-marks span:first-child { text-align: left; }
.slider-marks span:last-child { text-align: right; }

.check {
  height: 30px;
  margin-top: 33px;
  display: flex;
  align-items: center;
  gap: 16px;
}

.box {
  width: 24px;
  height: 24px;
  border: 2px solid #33373c;
  border-radius: 3px;
}

.check span {
  line-height: 30px;
  border-bottom: 2px dotted #eceef0;
}

.info {
  height: 30px;
  margin-top: 18px;
  display: flex;
  justify-content: space-between;
  color: #7b818b;
  line-height: 30px;
}

.info.first { margin-top: 32px; }
.info b { font-weight: 400; color: #eceef0; }
.info.fee { margin-top: 34px; }
.info.fee b { color: #c9a877; }

.submit {
  display: block;
  width: 100%;
  height: 71px;
  margin-top: 24px;
  border: 0;
  border-radius: 36px;
  background: #10b973;
  color: #fff;
  font: 500 28px "Lato", sans-serif;
}

.assets {
  display: flex;
  align-items: center;
  gap: 14px;
  padding: 32px 30px;
}

.assets h3 {
  margin: 0;
  font-size: 28px;
  font-weight: 700;
}

.assets svg {
  width: 26px;
  height: 26px;
  fill: none;
  stroke: #eceef0;
  stroke-width: 2.500;
}

/* annotations drawn on top of the screenshot */
.marks {
  position: absolute;
  left: 0;
  top: 0;
  width: 2922px;
  height: 1240px;
  pointer-events: none;
}

.arrow {
  fill: #f64c4a;
  stroke: #f64c4a;
  stroke-width: 4;
  stroke-linejoin: round;
}

.callout {
  fill: none;
  stroke: #f64c4a;
  stroke-width: 8;
}
```

FILE: chart.js
```js
const GREEN = '#10b973';
const RED = '#fb4160';
const VOL_GREEN = '#1c6a47';
const VOL_RED = '#8a2f3d';
const GRID = '#1b1d21';

const candleX = i => 75 + 15 * i;

// [up?, wick top, body top, body bottom, wick bottom] in page px
const candles = [
  [1,540,546,555,562],[1,529,546,551,562],[1,480,494,546,550],[1,460,474,494,504],[0,469,474,490,496],
  [0,489,489,491,508],[0,489,491,496,498],[0,493,496,516,517],[0,513,516,530,538],[0,530,530,584,590],
  [1,556,570,584,598],[1,558,570,571,582],[1,549,568,569,582],[0,564,568,574,576],[0,573,574,606,614],
  [1,578,584,606,607],[1,571,574,584,598],[1,556,572,573,582],[0,572,572,631,650],[0,632,632,638,678],
  [0,638,638,709,748],[0,700,709,731,750],[1,702,709,731,764],[0,704,709,748,784],[0,732,748,782,798],
  [0,782,782,916,922],[1,800,816,916,952],[0,802,816,831,858],[1,794,818,831,840],[0,804,818,822,840],
  [0,814,822,838,850],[0,838,838,862,878],[0,850,862,872,886],[1,829,838,872,876],[1,816,826,838,841],
  [0,810,826,837,846],[1,822,837,838,858],[0,837,838,856,868],[0,845,856,870,876],[1,858,862,870,880],
  [1,846,849,862,870],[0,840,848,849,859],[0,846,849,854,856],[0,854,854,892,902],[0,887,892,900,920],
  [1,824,851,900,901],[0,838,851,856,868],[0,847,856,874,889],[1,852,862,876,914],[0,846,862,878,889],
  [1,822,838,878,883],[0,834,838,844,873],[1,770,788,844,853],[0,778,788,812,813],[0,806,812,847,849],
  [0,845,847,858,861],[0,848,858,875,880],[1,830,847,876,877],[1,800,824,847,851],[1,806,820,824,835],
  [1,814,816,820,832],[1,772,812,816,830],[1,806,808,812,820],[1,782,786,808,817],[1,760,760,786,794],
  [0,746,760,772,777],[0,762,772,808,816],[0,803,808,823,838],[1,806,816,823,832],[0,816,816,838,842],
  [0,838,838,852,858],[1,800,812,852,856],[0,808,812,816,820],[1,798,806,816,817],[0,804,806,838,848],
  [0,838,838,870,880],[0,858,870,872,876],[0,870,870,876,888],[1,858,864,876,877],[1,842,846,866,876],
  [0,832,846,848,858],[0,840,848,864,878],[1,856,862,863,872],[1,858,858,860,866],[1,834,836,858,868],
  [0,818,836,838,842],[1,788,798,838,847],[0,786,798,810,814],[1,782,800,810,817],[1,778,784,800,804],
  [1,774,784,786,790],[0,782,784,814,816],[1,760,766,814,816],[0,744,766,770,774],[1,752,760,770,777],
  [1,752,756,760,780],[1,746,748,756,763]
];

// moving averages were read in two sections, hence two scales
const early = v => 360 + v * 0.408;
const late = v => 640 + v / 3;

function priceLine(first, head, tail) {
  const ys = [...head.map(early), ...tail.map(late)];
  return [[67, early(first)], ...ys.map((y, i) => [candleX(i), y])];
}

const ma5 = priceLine(458,
  [470,470,440,395,360,330,313,325,352,410,450,485,510,520,533,540,543,543,570,590,650,730,790,845,925,1025,1075,1125,1155,1175,1140,1160,1182,1192,1195,1195,1180,1172,1195,1205,1210,1220,1212,1230,1248,1248,1248,1265,1250,1235,1228],
  [660,605,575,558,570,590,622,630,608,585,550,525,500,465,440,438,450,468,520,565,565,558,552,552,575,605,640,675,680,660,660,650,645,640,635,590,550,515,490,466,474,450,430,412,400,360]);
const ma10 = priceLine(455,
  [450,450,432,415,410,405,390,382,378,387,392,397,412,440,470,495,512,522,550,558,590,635,670,710,755,835,890,960,1010,1055,1085,1110,1150,1172,1185,1165,1170,1175,1190,1198,1198,1198,1195,1210,1222,1230,1235,1238,1238,1238,1238],
  [678,650,628,618,618,622,618,605,585,580,568,574,568,535,508,488,485,485,492,503,503,503,508,540,565,588,603,611,611,611,632,645,660,658,648,630,600,585,565,545,530,500,475,450,428,420]);
const ma20 = priceLine(512,
  [510,505,490,475,465,450,440,430,421,421,421,421,423,428,437,445,450,455,460,468,490,515,545,575,615,665,705,745,780,808,840,875,915,950,975,1005,1040,1075,1105,1128,1142,1158,1175,1190,1205,1200,1204,1208,1215,1220,1222],
  [655,640,635,640,642,647,647,640,635,630,624,617,595,575,570,558,550,545,540,536,534,540,540,540,540,540,545,552,552,558,565,574,580,590,605,606,600,600,595,582,580,575,568,552,538,522]);

// volume pane: one value per candle from i=1 (y = 940 + v / 3)
const volTops = [558,528,522,522,582,624,606,564,522,534,582,564,624,570,534,570,570,480,462,480,522,444,468,456,204,270,420,540,498,540,510,522,546,564,558,570,564,570,570,516,600,600,492,540,504,550,540,546,546,498,540,444,510,516,582,558,510,510,534,546,492,594,582,510,522,540,534,552,594,576,522,546,564,552,516,594,600,552,546,558,546,594,612,588,546,540,546,564,552,594,570,516,492,564,558,624];
const volMa5 = [584,582,570,555,540,550,570,582,582,568,562,550,562,572,570,570,564,540,520,510,503,480,474,474,420,366,366,378,390,450,500,522,522,534,540,552,558,564,564,558,564,570,558,546,546,534,522,534,534,534,534,510,504,504,522,525,538,540,540,530,518,530,545,545,540,546,535,545,556,556,552,555,550,540,548,548,550,555,565,570,565,565,570,582,578,575,562,558,546,558,565,564,552,545,540,552];
const volMa10 = [574,565,558,556,560,565,570,572,565,558,558,562,570,575,570,565,565,552,546,540,534,522,510,498,465,430,420,426,432,438,438,444,450,462,500,528,540,546,552,546,558,564,558,558,552,550,546,540,540,540,534,516,520,520,528,528,530,528,524,526,520,532,545,540,535,533,535,540,545,552,550,553,550,545,552,564,564,562,565,565,568,572,575,576,574,570,565,564,566,570,565,560,550,545,545,556];
const volMa20 = [572,570,570,570,565,565,568,570,568,564,564,564,568,570,570,568,568,562,556,552,546,546,540,540,516,498,492,492,492,492,486,486,480,480,480,480,480,486,492,492,498,504,504,510,522,540,546,546,546,546,546,540,540,540,540,540,535,534,530,528,524,528,535,530,530,528,528,528,535,540,534,540,546,546,540,546,546,552,552,555,558,558,558,558,565,565,562,562,558,565,565,558,556,558,564,564];

const volY = v => 940 + v / 3;
const volLine = vals => vals.map((v, i) => [candleX(i + 1), volY(v)]);

const priceTicks = ['102,000.00','96,000.00','90,000.00','84,000.00','78,000.00','72,000.00','66,000.00','60,000.00'];
const dateTicks = ['2026-01','01-28','2026-02','02-17','02-27','2026-03','03-19','03-29','2026-04','04-18'];

const badges = [[69,1],[211,2],[328,3],[514,3],[639,1],[759,1],[873,5],[953,1],[1029,1],[1324,6],[1418,2]];

const polyline = (pts, color) =>
  `<polyline points="${pts.map(p => p.join(',')).join(' ')}" fill="none" stroke="${color}" stroke-width="2" stroke-linejoin="round"/>`;

function gridLayer() {
  let s = '';
  for (let i = 0; i < priceTicks.length; i++) {
    const y = 408 + 78 * i;
    s += `<path d="M68 ${y}H1634" stroke="${GRID}" stroke-width="2"/>`;
    s += `<text x="1639" y="${y + 6}" font-size="22" fill="#7f848c">${priceTicks[i]}</text>`;
  }
  [1080, 1138].forEach((y, i) => {
    s += `<path d="M68 ${y}H1634" stroke="${GRID}" stroke-width="2"/>`;
    s += `<text x="1639" y="${y + 7}" font-size="22" fill="#7f848c">${['20.000K', '5.000K'][i]}</text>`;
  });
  dateTicks.forEach((d, i) => {
    const x = 181 + 149.9 * i;
    s += `<path d="M${x} 360V1172" stroke="${GRID}" stroke-width="2"/>`;
    s += `<path d="M${x} 1172V1180" stroke="#2a2d32" stroke-width="2"/>`;
    s += `<text x="${x}" y="1206" font-size="22" fill="#7f848c" text-anchor="middle">${d}</text>`;
  });
  s += `<path d="M66 1003H1767M66 1173H1624" stroke="#1f2226" stroke-width="3"/>`;
  s += `<path d="M1624 360V1173" stroke="#1f2226" stroke-width="2"/>`;
  return s;
}

function watermark() {
  return `<g fill="none" stroke="#191b1f" stroke-linecap="round" stroke-linejoin="round">
    <path d="M654 636V727L695 690 735 727" stroke-width="28"/>
    <path d="M738 636L714 668" stroke-width="26"/>
  </g>
  <text x="776" y="720" font-size="118" font-weight="700" fill="#191b1f" textLength="272" lengthAdjust="spacingAndGlyphs" style="font-family:Lato,sans-serif">KCEX</text>`;
}

function candleLayer() {
  return candles.map(([up, top, bodyTop, bodyBot, bottom], i) => {
    const x = candleX(i);
    const color = up ? GREEN : RED;
    return `<path d="M${x} ${top}V${bottom}" stroke="${color}" stroke-width="2"/>` +
      `<rect x="${x - 6}" y="${bodyTop}" width="12" height="${Math.max(bodyBot - bodyTop, 2)}" fill="${color}"/>`;
  }).join('');
}

function volumeLayer() {
  return volTops.map((top, i) => {
    const y = volY(top);
    const color = candles[i + 1][0] ? VOL_GREEN : VOL_RED;
    return `<rect x="${candleX(i + 1) - 6}" y="${y}" width="12" height="${1158 - y}" fill="${color}"/>`;
  }).join('');
}

function badgeLayer() {
  return badges.map(([x, n]) => `<g>
    <rect x="${x + 1}" y="950" width="72" height="44" rx="9" fill="#0d1014" stroke="#1f2226" stroke-width="2"/>
    <path d="M${x + 34} 958h4v27h-4" fill="none" stroke="#7f848c" stroke-width="1.500"/>
    <rect x="${x + 10}" y="957" width="25" height="29" rx="1" fill="#0d1014" stroke="#7f848c" stroke-width="1.500"/>
    <text x="${x + 13}" y="970" font-size="11" fill="#7f848c">N=</text>
    <path d="M${x + 14} 975h17M${x + 14} 980h17" stroke="#7f848c" stroke-width="1.500"/>
    <text x="${x + 57}" y="980" font-size="26" fill="#9a9ea6" text-anchor="middle">${n}</text>
  </g>`).join('');
}

function markers() {
  return `<path d="M131 446H120V458M115 453l5 5 5-5" fill="none" stroke="#fff" stroke-width="2"/>
    <text x="140" y="452" font-size="22" fill="#fff">97,924.48</text>
    <path d="M475 967H465V955M460 960l5-5 5 5" fill="none" stroke="#fff" stroke-width="2"/>
    <text x="485" y="975" font-size="22" fill="#fff">60,</text>`;
}

function lastPrice() {
  return `<path d="M67 748H1624" stroke="${GREEN}" stroke-width="2" stroke-dasharray="4 4"/>
    <rect x="1624" y="728" width="130" height="72" fill="${GREEN}"/>
    <text x="1632" y="757" font-size="24" fill="#fff">75,733.75</text>
    <text x="1632" y="789" font-size="24" fill="#fff">14:49:23</text>`;
}

document.getElementById('chart').innerHTML =
  gridLayer() + watermark() + lastPrice() + candleLayer() +
  polyline(ma20, '#a3c484') + polyline(ma10, '#8b4cf6') + polyline(ma5, '#f5b041') +
  markers() + badgeLayer() +
  volumeLayer() +
  polyline(volLine(volMa20), '#a3c484') + polyline(volLine(volMa10), '#8b4cf6') + polyline(volLine(volMa5), '#f5b041');
```
